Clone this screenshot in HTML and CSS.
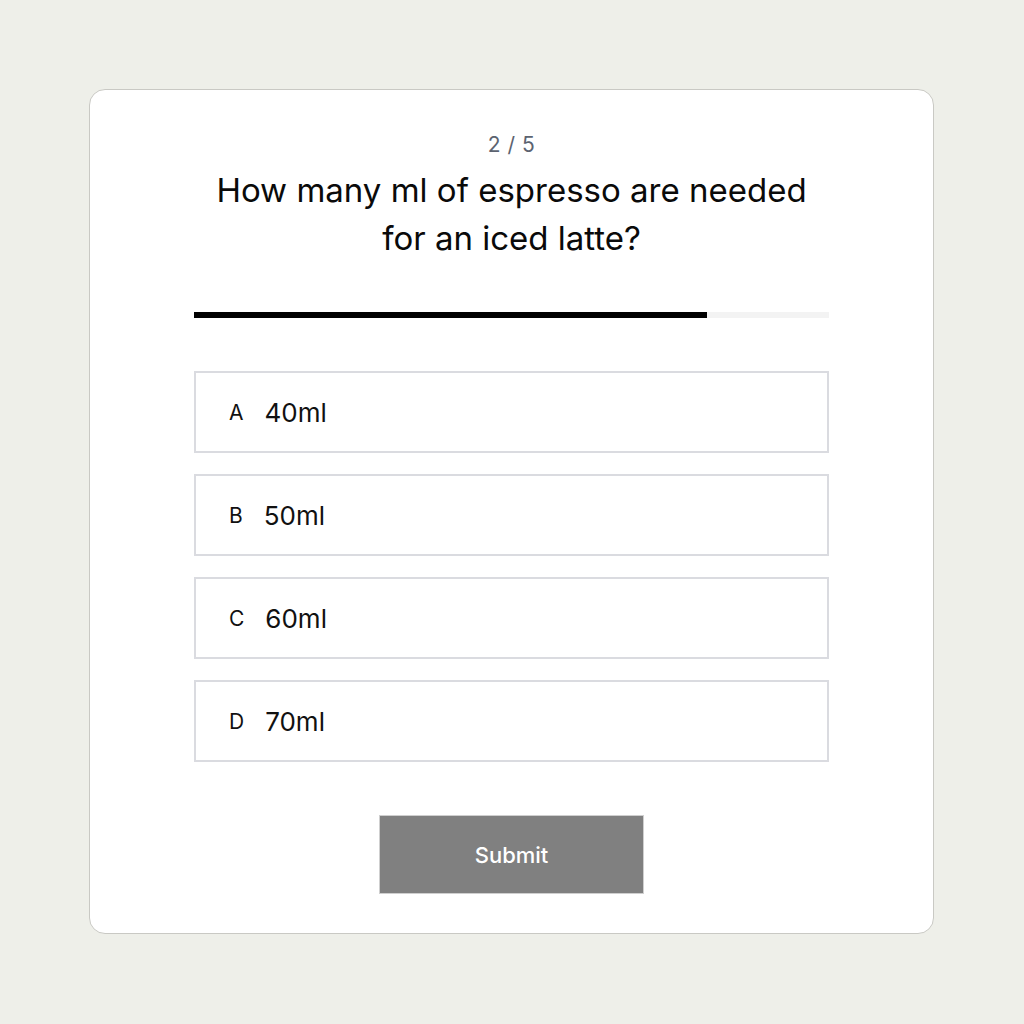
FILE: index.html
```html
<!DOCTYPE html>
<html lang="en">
<head>
<meta charset="utf-8">
<title>Quiz</title>
<link rel="stylesheet" href="styles.css">
</head>
<body>
<main class="card">
  <div class="counter">2 / 5</div>
  <h1 class="question">How many ml of espresso are needed<br>for an iced latte?</h1>
  <div class="progress"><div class="progress-fill" style="width: 80.8%"></div></div>
  <ul class="options">
    <li class="option"><span class="letter">A</span><span class="value">40ml</span></li>
    <li class="option"><span class="letter">B</span><span class="value">50ml</span></li>
    <li class="option"><span class="letter">C</span><span class="value">60ml</span></li>
    <li class="option"><span class="letter">D</span><span class="value">70ml</span></li>
  </ul>
  <button class="submit" type="button">Submit</button>
</main>
</body>
</html>
```

FILE: styles.css
```css
* { box-sizing: border-box; }
html, body { margin: 0; padding: 0; }
body {
  background: #eeefe9;
  font-family: Inter, "Noto Sans", sans-serif;
  color: #111;
  padding: 89px;
  min-height: 1024px;
}
.card {
  width: 845px;
  height: 845px;
  background: #fff;
  border: 1px solid #c9c9c4;
  border-radius: 16px;
  padding: 41px 104px 0;
  display: flex;
  flex-direction: column;
  align-items: center;
}
.counter {
  font-size: 21px;
  line-height: 28px;
  color: #5c6370;
  letter-spacing: 0.5px;
}
.question {
  margin: 7px 0 0;
  font-size: 33px;
  line-height: 48px;
  font-weight: 400;
  text-align: center;
  color: #0a0a0a;
}
.progress {
  margin-top: 50px;
  width: 100%;
  height: 6px;
  background: #f3f3f3;
}
.progress-fill {
  height: 100%;
  background: #000;
}
.options {
  list-style: none;
  margin: 53px 0 0;
  padding: 0;
  width: 100%;
  display: flex;
  flex-direction: column;
  gap: 21px;
}
.option {
  height: 82px;
  border: 2px solid #dadbe0;
  display: flex;
  align-items: center;
  padding-left: 33px;
}
.letter {
  font-size: 21px;
  margin-right: 21px;
  color: #111;
}
.value {
  font-size: 26px;
  color: #111;
}
.submit {
  margin-top: 53px;
  width: 265px;
  height: 79px;
  border: 1px solid #cfcfcf;
  background: #808080;
  color: #fff;
  font-family: Inter, "Noto Sans", sans-serif;
  font-size: 22px;
  font-weight: 500;
}
```
